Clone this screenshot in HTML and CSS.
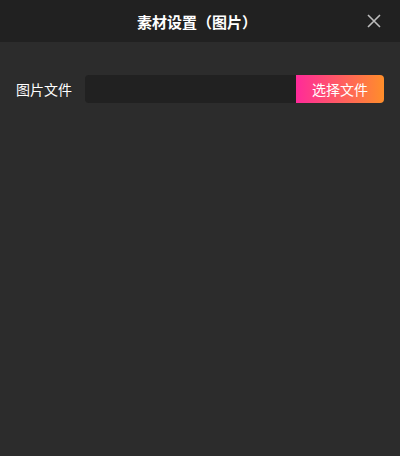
FILE: index.html
```html
<!DOCTYPE html>
<html lang="zh">
<head>
  <meta charset="UTF-8">
  <title>素材设置</title>
  <link rel="stylesheet" href="styles.css">
</head>
<body>
  <div class="dialog">
    <div class="header">
      <h1>素材设置（图片）</h1>
      <button class="close" aria-label="关闭">
        <svg width="14" height="14" viewBox="0 0 14 14"><path d="M1 1L13 13M13 1L1 13" stroke="#bdbdbd" stroke-width="1.6" fill="none"/></svg>
      </button>
    </div>
    <div class="content">
      <div class="field">
        <label>图片文件</label>
        <div class="picker">
          <div class="path"></div>
          <button class="choose">选择文件</button>
        </div>
      </div>
    </div>
  </div>
</body>
</html>
```

FILE: styles.css
```css
* {
  box-sizing: border-box;
}

html, body {
  margin: 0;
  height: 100%;
}

body {
  font-family: "Noto Sans CJK SC", "Noto Sans", sans-serif;
  background: #2c2c2c;
  color: #fff;
}

.dialog {
  height: 100%;
  display: flex;
  flex-direction: column;
}

.header {
  height: 42px;
  background: #212121;
  display: flex;
  align-items: center;
  justify-content: center;
  position: relative;
}

.header h1 {
  margin: 0 0 0 -6px;
  font-size: 15px;
  font-weight: 700;
}

.close {
  position: absolute;
  right: 19px;
  top: 14px;
  background: none;
  border: none;
  padding: 0;
  width: 14px;
  height: 14px;
  cursor: pointer;
  display: flex;
}

.content {
  padding: 33px 16px 0 16px;
}

.field {
  display: flex;
  align-items: center;
}

.field label {
  font-size: 14px;
  width: 69px;
  line-height: 28px;
  margin-top: -1px;
}

.picker {
  flex: 1;
  display: flex;
  height: 28px;
  border-radius: 4px;
  overflow: hidden;
}

.path {
  flex: 1;
  background: #212121;
}

.choose {
  width: 88px;
  border: none;
  font-family: inherit;
  font-size: 14px;
  color: #fff;
  background: linear-gradient(to right, #ff2a9a, #ff8e2a);
  cursor: pointer;
}
```
